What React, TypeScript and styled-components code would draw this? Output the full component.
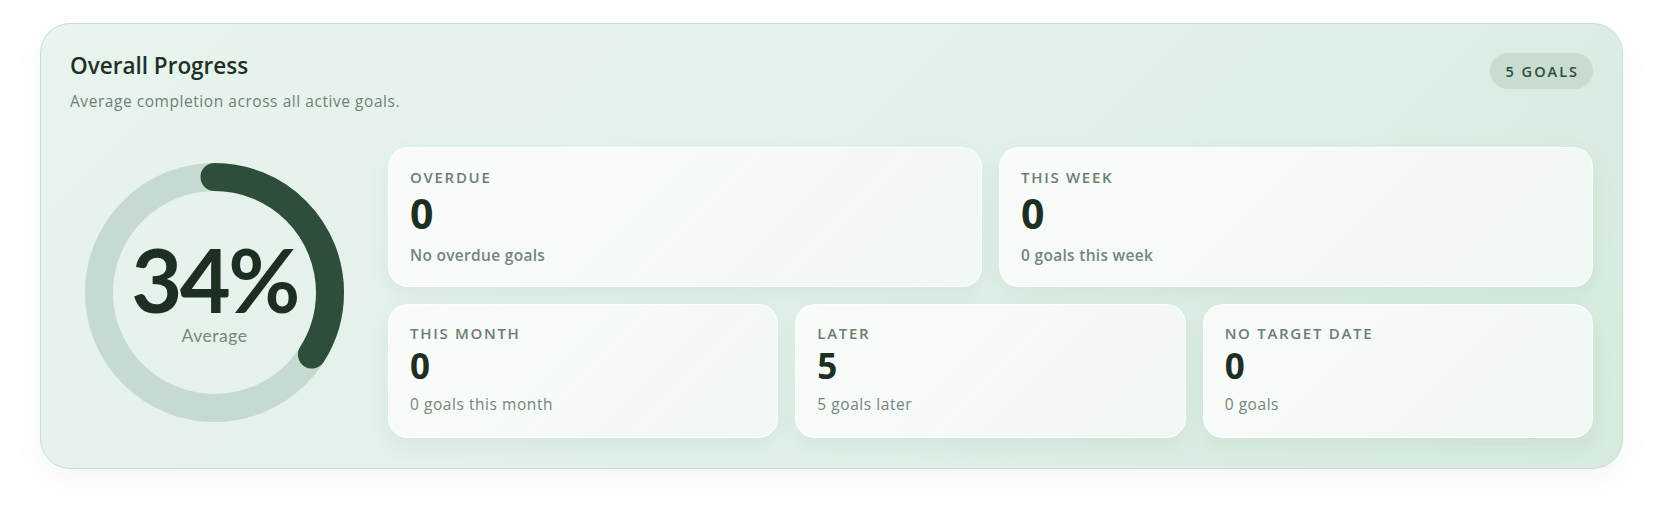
import * as React from 'react'
import styled, { createGlobalStyle } from 'styled-components'

const GlobalStyle = createGlobalStyle`
  html, body {
    margin: 0;
    padding: 0;
    background: #ffffff;
  }
  body {
    font-family: "Open Sans", Lato, sans-serif;
    color: #1e2f24;
  }
`

const Page = styled.div`
  padding: 23px 44px 40px 40px;
`

const Panel = styled.section`
  box-sizing: border-box;
  height: 446px;
  padding: 27px 29px 29px 29px;
  border-radius: 30px;
  border: 1px solid #c9ded2;
  background: linear-gradient(135deg, #e8f4ee 0%, #e1f1e8 55%, #d6eade 100%);
  box-shadow: 0 10px 30px rgba(60, 110, 80, 0.06);
  display: flex;
  flex-direction: column;
`

const Header = styled.div`
  display: flex;
  justify-content: space-between;
  align-items: flex-start;
`

const Title = styled.h2`
  margin: 0;
  font-size: 22.5px;
  font-weight: 600;
  line-height: 30px;
  color: #1f3127;
`

const Subtitle = styled.p`
  margin: 9px 0 0;
  font-size: 15.5px;
  letter-spacing: 0.55px;
  line-height: 22px;
  color: #6f8078;
`

const Badge = styled.span`
  margin-top: 2px;
  height: 36px;
  padding: 0 14px 0 16px;
  display: inline-flex;
  align-items: center;
  border-radius: 18px;
  background: #c8dcd0;
  color: #2f4b3c;
  font-size: 14.5px;
  font-weight: 600;
  letter-spacing: 2px;
`

const Body = styled.div`
  margin-top: 35px;
  display: flex;
  gap: 29px;
  align-items: center;
`

const RingWrap = styled.div`
  position: relative;
  width: 289px;
  height: 259px;
  flex-shrink: 0;
  display: flex;
  justify-content: center;
`

const RingLabel = styled.div`
  position: absolute;
  inset: 0;
  display: flex;
  flex-direction: column;
  align-items: center;
  justify-content: center;
`

const Percent = styled.div`
  font-family: Lato, sans-serif;
  font-size: 88px;
  font-weight: 700;
  line-height: 76px;
  letter-spacing: -2.5px;
  color: #1d2e23;
  margin-top: 2px;
`

const PercentCaption = styled.div`
  font-family: Lato, sans-serif;
  font-size: 17.5px;
  letter-spacing: 0.5px;
  line-height: 22px;
  color: #76877e;
  margin-top: 8px;
`

const Grid = styled.div`
  flex: 1;
  display: flex;
  flex-direction: column;
  gap: 17px;
`

const Row = styled.div<{ $cols: number }>`
  display: grid;
  grid-template-columns: repeat(${p => p.$cols}, 1fr);
  gap: 17px;
`

const Stat = styled.div<{ $big?: boolean }>`
  box-sizing: border-box;
  height: ${p => (p.$big ? 140 : 134)}px;
  padding: ${p => (p.$big ? 19 : 18)}px 21px 0;
  border-radius: 20px;
  background: linear-gradient(135deg, rgba(250, 252, 251, 0.94), rgba(243, 248, 245, 0.92));
  border: 1px solid rgba(255, 255, 255, 0.8);
  box-shadow: 0 8px 22px rgba(70, 120, 90, 0.08);
`

const StatLabel = styled.div`
  font-size: 15px;
  font-weight: 600;
  letter-spacing: 1.7px;
  line-height: 20px;
  color: #6c7d74;
`

const StatValue = styled.div<{ $big?: boolean }>`
  font-size: ${p => (p.$big ? 41 : 35)}px;
  font-weight: 700;
  line-height: ${p => (p.$big ? 48 : 42)}px;
  color: #1d2e23;
  margin-top: 2px;
`

const StatNote = styled.div<{ $strong?: boolean }>`
  font-size: 15.5px;
  font-weight: ${p => (p.$strong ? 600 : 400)};
  letter-spacing: ${p => (p.$strong ? 0.3 : 0.55)}px;
  line-height: 22px;
  color: #74857c;
  margin-top: ${p => (p.$strong ? 7 : 6)}px;
`

type StatData = { label: string; value: number; note: string }

const top: StatData[] = [
  { label: 'OVERDUE', value: 0, note: 'No overdue goals' },
  { label: 'THIS WEEK', value: 0, note: '0 goals this week' },
]

const bottom: StatData[] = [
  { label: 'THIS MONTH', value: 0, note: '0 goals this month' },
  { label: 'LATER', value: 5, note: '5 goals later' },
  { label: 'NO TARGET DATE', value: 0, note: '0 goals' },
]

function ProgressRing({ pct }: { pct: number }) {
  const size = 259
  const stroke = 28
  const r = (size - stroke) / 2
  const c = 2 * Math.PI * r
  return (
    <RingWrap>
      <svg width={size} height={size} viewBox={`0 0 ${size} ${size}`}>
        <circle cx={size / 2} cy={size / 2} r={r} fill="none" stroke="#c6dacf" strokeWidth={stroke} />
        <circle
          cx={size / 2}
          cy={size / 2}
          r={r}
          fill="none"
          stroke="#2e4d3a"
          strokeWidth={stroke}
          strokeLinecap="round"
          strokeDasharray={`${(c * pct) / 100} ${c}`}
          transform={`rotate(-90 ${size / 2} ${size / 2})`}
        />
      </svg>
      <RingLabel>
        <Percent>{pct}%</Percent>
        <PercentCaption>Average</PercentCaption>
      </RingLabel>
    </RingWrap>
  )
}

export default function App() {
  return (
    <Page>
      <GlobalStyle />
      <Panel>
        <Header>
          <div>
            <Title>Overall Progress</Title>
            <Subtitle>Average completion across all active goals.</Subtitle>
          </div>
          <Badge>5 GOALS</Badge>
        </Header>
        <Body>
          <ProgressRing pct={34} />
          <Grid>
            <Row $cols={2}>
              {top.map(s => (
                <Stat key={s.label} $big>
                  <StatLabel>{s.label}</StatLabel>
                  <StatValue $big>{s.value}</StatValue>
                  <StatNote $strong>{s.note}</StatNote>
                </Stat>
              ))}
            </Row>
            <Row $cols={3}>
              {bottom.map(s => (
                <Stat key={s.label}>
                  <StatLabel>{s.label}</StatLabel>
                  <StatValue>{s.value}</StatValue>
                  <StatNote>{s.note}</StatNote>
                </Stat>
              ))}
            </Row>
          </Grid>
        </Body>
      </Panel>
    </Page>
  )
}
